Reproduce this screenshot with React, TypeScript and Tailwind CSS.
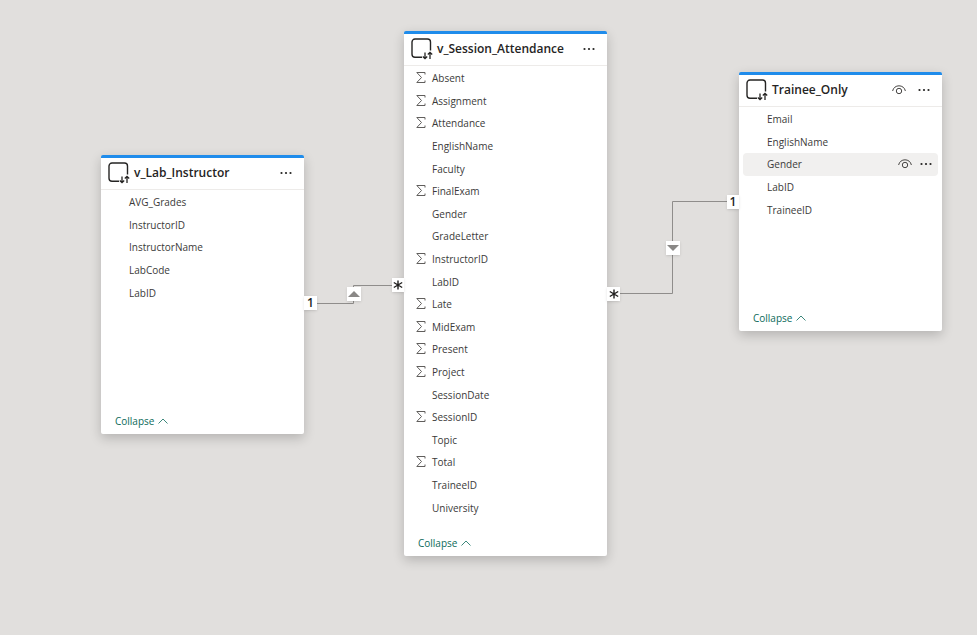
import type { ReactNode } from 'react';

type Field = { name: string; sum?: boolean; active?: boolean };

const instructorFields: Field[] = [
  { name: 'AVG_Grades' },
  { name: 'InstructorID' },
  { name: 'InstructorName' },
  { name: 'LabCode' },
  { name: 'LabID' },
];

const attendanceFields: Field[] = [
  { name: 'Absent', sum: true },
  { name: 'Assignment', sum: true },
  { name: 'Attendance', sum: true },
  { name: 'EnglishName' },
  { name: 'Faculty' },
  { name: 'FinalExam', sum: true },
  { name: 'Gender' },
  { name: 'GradeLetter' },
  { name: 'InstructorID', sum: true },
  { name: 'LabID' },
  { name: 'Late', sum: true },
  { name: 'MidExam', sum: true },
  { name: 'Present', sum: true },
  { name: 'Project', sum: true },
  { name: 'SessionDate' },
  { name: 'SessionID', sum: true },
  { name: 'Topic' },
  { name: 'Total', sum: true },
  { name: 'TraineeID' },
  { name: 'University' },
];

const traineeFields: Field[] = [
  { name: 'Email' },
  { name: 'EnglishName' },
  { name: 'Gender', active: true },
  { name: 'LabID' },
  { name: 'TraineeID' },
];

const TableIcon = () => (
  <svg width="22" height="22" viewBox="0 0 22 22" fill="none" stroke="#252423" className="shrink-0">
    <path d="M11 19.300H4a3 3 0 0 1-3-3V4a3 3 0 0 1 3-3h12.500a3 3 0 0 1 3 3v8.500" strokeWidth="1.4" />
    <path d="M14 14.500v6M11.800 18.500l2.200 2.200 2.200-2.200M19 21v-6M16.800 16.500l2.200-2.200 2.200 2.200" strokeWidth="1.3" />
  </svg>
);

const SigmaIcon = () => (
  <svg width="10" height="12" viewBox="0 0 10 12" fill="none" stroke="#605e5c" strokeWidth="1" className="shrink-0">
    <path d="M9 2.500V.5H.8L5.500 5.500.8 10.500H9v-2" />
  </svg>
);

const EyeIcon = () => (
  <svg width="14" height="10" viewBox="0 0 14 10" fill="none" stroke="#484644" strokeWidth="1">
    <path d="M.6 6C1.300 2.600 4 .8 7 .8S12.700 2.600 13.400 6" />
    <circle cx="7" cy="6" r="2.700" />
  </svg>
);

const DotsIcon = () => (
  <svg width="12" height="4" viewBox="0 0 12 4" fill="#252423">
    <circle cx="1.500" cy="2" r="1.100" />
    <circle cx="6" cy="2" r="1.100" />
    <circle cx="10.500" cy="2" r="1.100" />
  </svg>
);

const FieldRow = ({ field }: { field: Field }) => (
  <li className={`mx-1 flex items-center rounded-sm pl-2 pr-1.5 ${field.active ? 'bg-[#f1f0ef]' : ''}`}>
    <span className="flex w-4 shrink-0">{field.sum && <SigmaIcon />}</span>
    <span className="flex-1 text-[10px] leading-4 text-[#3b3a39]">{field.name}</span>
    {field.active && (
      <span className="flex items-center gap-2">
        <button type="button" aria-label="Hide field"><EyeIcon /></button>
        <button type="button" aria-label="Field options" className="flex"><DotsIcon /></button>
      </span>
    )}
  </li>
);

type TableCardProps = {
  title: string;
  fields: Field[];
  place: string;
  listHeight: string;
  footer: string;
  hideable?: boolean;
};

const TableCard = ({ title, fields, place, listHeight, footer, hideable }: TableCardProps) => (
  <section className={`absolute w-[203px] rounded-xs border-t-3 border-[#1f8ceb] bg-white shadow-[0_4px_12px_rgba(0,0,0,0.2)] ${place}`}>
    <header className="flex h-8 items-center border-b border-[#edebe9] pb-px pl-[7px] pr-3">
      <TableIcon />
      <h2 className="ml-1 flex-1 text-[12px] font-semibold leading-4 text-[#252423]">{title}</h2>
      <span className="flex items-center gap-3">
        {hideable && <button type="button" aria-label="Hide table"><EyeIcon /></button>}
        <button type="button" aria-label="Table options" className="flex"><DotsIcon /></button>
      </span>
    </header>
    <ul className={`mt-px grid auto-rows-fr ${listHeight}`}>
      {fields.map((field) => (
        <FieldRow key={field.name} field={field} />
      ))}
    </ul>
    <footer className={`px-3.5 pb-[5px] ${footer}`}>
      <button type="button" className="flex items-center gap-1 text-[10px] leading-4 text-[#0b6a5a]">
        Collapse
        <svg width="10" height="6" viewBox="0 0 10 6" fill="none" stroke="currentColor" strokeWidth="0.8">
          <path d="M.5 5.500 5 1l4.500 4.500" />
        </svg>
      </button>
    </footer>
  </section>
);

const Badge = ({ place, children }: { place: string; children: ReactNode }) => (
  <span className={`absolute flex h-3.5 items-center justify-center bg-white text-[12px] font-semibold text-[#201f1e] shadow-sm ${place}`}>
    {children}
  </span>
);

const Many = () => (
  <svg width="10" height="10" viewBox="0 0 10 10" stroke="#201f1e" strokeWidth="1.400" role="img" aria-label="many">
    <path d="M5 .5v9M.8 2.500l8.400 5M9.200 2.500l-8.400 5" />
  </svg>
);

const App = () => (
  <main className="relative min-h-screen w-full overflow-hidden bg-[#e1dfdd] font-['Open_Sans','Noto_Sans',sans-serif]">
    <svg width="977" height="635" className="absolute left-0 top-0" fill="none" stroke="#8f8d8b" strokeWidth="1">
      <path d="M317 303.500H353.500V285.500H392" />
      <path d="M620 293.500H672.500V201.500H727" />
    </svg>

    <TableCard
      title="v_Lab_Instructor"
      fields={instructorFields}
      place="left-[101px] top-[155px]"
      listHeight="h-[113px]"
      footer="pt-[109px]"
    />
    <TableCard
      title="v_Session_Attendance"
      fields={attendanceFields}
      place="left-[404px] top-[31px]"
      listHeight="h-[452px]"
      footer="pt-4"
    />
    <TableCard
      title="Trainee_Only"
      fields={traineeFields}
      place="left-[739px] top-[72px]"
      listHeight="h-[113px]"
      footer="pt-[89px]"
      hideable
    />

    <Badge place="left-[304px] top-[296px] w-[13px]">1</Badge>
    <Badge place="left-[392px] top-[278px] w-3"><Many /></Badge>
    <Badge place="left-[607px] top-[287px] w-[13px]"><Many /></Badge>
    <Badge place="left-[727px] top-[195px] w-3">1</Badge>
    <Badge place="left-[347px] top-[287px] w-3.5">
      <svg width="12" height="6" viewBox="0 0 12 6" fill="#8a8886"><path d="M6 0l6 6H0z" /></svg>
    </Badge>
    <Badge place="left-[666px] top-[241px] w-3.5">
      <svg width="12" height="6" viewBox="0 0 12 6" fill="#8a8886"><path d="M0 0h12L6 6z" /></svg>
    </Badge>
  </main>
);

export default App;
